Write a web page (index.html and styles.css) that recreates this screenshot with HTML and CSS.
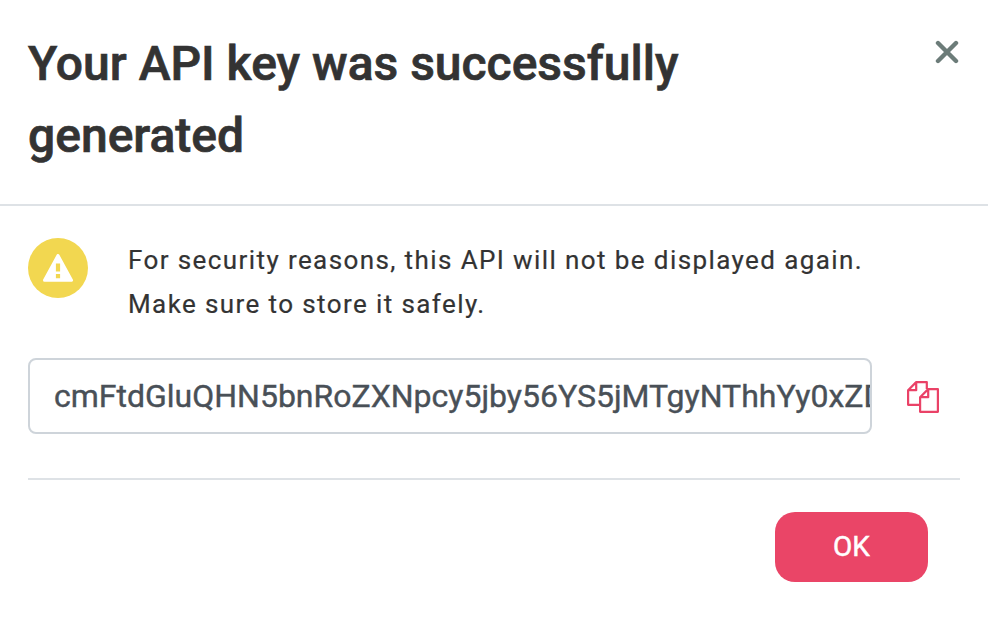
FILE: index.html
```html
<!DOCTYPE html>
<html lang="en">
<head>
<meta charset="utf-8">
<title>API key</title>
<link rel="stylesheet" href="styles.css">
</head>
<body>
<main class="dialog">
  <header class="header">
    <h1 class="title">Your API key was successfully generated</h1>
    <button class="close" aria-label="Close"><svg width="24" height="24" viewBox="0 0 24 24"><path d="M3 3 21 21M21 3 3 21" stroke="#6c7c79" stroke-width="4.4" stroke-linecap="round"/></svg></button>
  </header>
  <section class="body">
    <div class="notice">
      <div class="badge"><svg width="32" height="28" viewBox="0 0 32 28"><path d="M16 1.5 29.5 26.3H2.5Z" fill="#fff" stroke="#fff" stroke-width="3" stroke-linejoin="round"/><path d="M13.9 9.5h4.2v8h-4.2ZM13.9 20h4.2v4.2h-4.2Z" fill="#f2d750"/></svg></div>
      <p class="message">For security reasons, this API will not be displayed again.<br>Make sure to store it safely.</p>
    </div>
    <div class="key-row">
      <div class="key">cmFtdGluQHN5bnRoZXNpcy5jby56YS5jMTgyNThhYy0xZDNm</div>
      <button class="copy" aria-label="Copy"><svg width="34" height="34" viewBox="0 0 34 34" fill="none" stroke="#ea4267" stroke-width="2.2" stroke-linejoin="round"><path d="M13 24.8H2.1V10.2L10.2 2.1H20.8V9M10.2 2.1V10.2H2.1M14.1 31.8V17.2L22.2 9.1H31.9V31.8ZM22.2 9.1V17.2H14.1"/></svg></button>
    </div>
    <footer class="footer"><button class="ok">OK</button></footer>
  </section>
</main>
</body>
</html>
```
FILE: styles.css
```css
* { box-sizing: border-box; }
body { margin: 0; background: #fff; font-family: Roboto, sans-serif; color: #333; }
button { border: 0; padding: 0; background: none; font-family: inherit; }
svg { display: block; }
.dialog { height: 642px; }
.header { display: flex; justify-content: space-between; align-items: flex-start; height: 206px; padding: 28px 29px 0 28px; border-bottom: 2px solid #dee2e6; }
.title { width: 720px; margin: 0; font-size: 48px; line-height: 72px; font-weight: 500; -webkit-text-stroke: 0.7px #333; }
.close { margin-top: 12px; }
.body { padding: 32px 28px 0; }
.notice { display: flex; gap: 40px; height: 120px; }
.badge { display: flex; align-items: center; justify-content: center; width: 60px; height: 60px; border-radius: 50%; background: #f2d750; }
.message { margin: 0; font-size: 26px; line-height: 44px; letter-spacing: 1.4px; white-space: nowrap; -webkit-text-stroke: 0.2px #333; }
.key-row { display: flex; align-items: center; gap: 34px; }
.copy { margin-top: 2px; }
.key { width: 844px; height: 76px; padding: 0 0 0 24px; border: 2px solid #ced4da; border-radius: 8px; overflow: hidden; white-space: nowrap; font-size: 32px; line-height: 72px; color: #495057; -webkit-text-stroke: 0.4px #495057; }
.footer { display: flex; justify-content: flex-end; margin-top: 44px; padding: 32px 32px 0 0; border-top: 2px solid #dee2e6; }
.ok { width: 153px; height: 70px; padding-bottom: 2px; border-radius: 20px; background: #ea4567; color: #fff; font-size: 28px; font-weight: 400; -webkit-text-stroke: 0.5px #fff; }
```
